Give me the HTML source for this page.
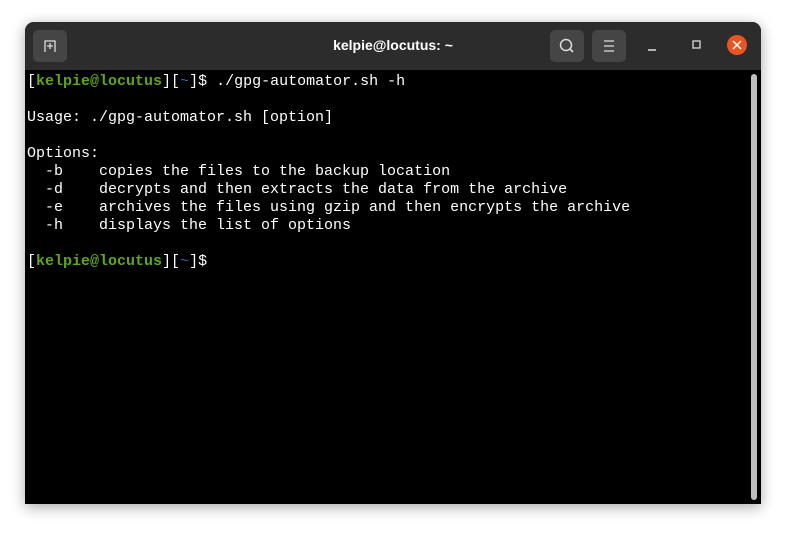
<!DOCTYPE html>
<html><head><style>
body{margin:0;width:786px;height:533px;background:#fff;position:relative;overflow:hidden;font-family:"Liberation Sans",sans-serif}
.win{position:absolute;left:25px;top:22px;width:736px;height:482px;background:#000;border-radius:9px 9px 0 0;box-shadow:0 3px 14px rgba(0,0,0,.35);overflow:hidden}
.tb{position:absolute;left:0;top:0;width:736px;height:48px;background:#2c2c2c}
.btn{position:absolute;top:8px;width:34px;height:32px;background:#454545;border-radius:5px}
.title{position:absolute;left:0;right:0;top:15px;text-align:center;color:#fff;font-weight:bold;font-size:14px}
pre{position:absolute;left:2px;top:51px;margin:0;font-family:"Liberation Mono",monospace;font-size:15px;line-height:18px;color:#fff}
.g{color:#5fa71a;font-weight:bold}.b{color:#3465a4}
.sb{position:absolute;left:726px;top:52px;width:6px;height:426px;background:#bdbdbd;border-radius:3px}
</style></head><body>
<div class="win">
<div class="tb">
<div class="btn" style="left:8px"><svg width="34" height="32"><path d="M12 22V11h10v11M14 16h6M17 13v6" stroke="#ddd" stroke-width="1.3" fill="none"/></svg></div>
<div class="title">kelpie@locutus: ~</div>
<div class="btn" style="left:525px"><svg width="34" height="32"><circle cx="16" cy="15" r="5.5" stroke="#ddd" stroke-width="1.5" fill="none"/><path d="M20 19l3 3" stroke="#ddd" stroke-width="1.6"/></svg></div>
<div class="btn" style="left:567px"><svg width="34" height="32"><path d="M12 11h10M12 16h10M12 21h10" stroke="#ddd" stroke-width="1.3"/></svg></div>
<svg style="position:absolute;left:620px;top:10px" width="110" height="28"><path d="M3 18h8" stroke="#ddd" stroke-width="1.5"/><rect x="48" y="9" width="7" height="7" stroke="#ddd" stroke-width="1.3" fill="none"/><circle cx="92" cy="13" r="10" fill="#e95420"/><path d="M88 9l8 8M96 9l-8 8" stroke="#fff" stroke-width="1.5"/></svg>
</div>
<pre>[<span class="g">kelpie@locutus</span>][<span class="b">~</span>]$ ./gpg-automator.sh -h

Usage: ./gpg-automator.sh [option]

Options:
  -b    copies the files to the backup location
  -d    decrypts and then extracts the data from the archive
  -e    archives the files using gzip and then encrypts the archive
  -h    displays the list of options

[<span class="g">kelpie@locutus</span>][<span class="b">~</span>]$</pre>
<div class="sb"></div>
</div>
</body></html>
